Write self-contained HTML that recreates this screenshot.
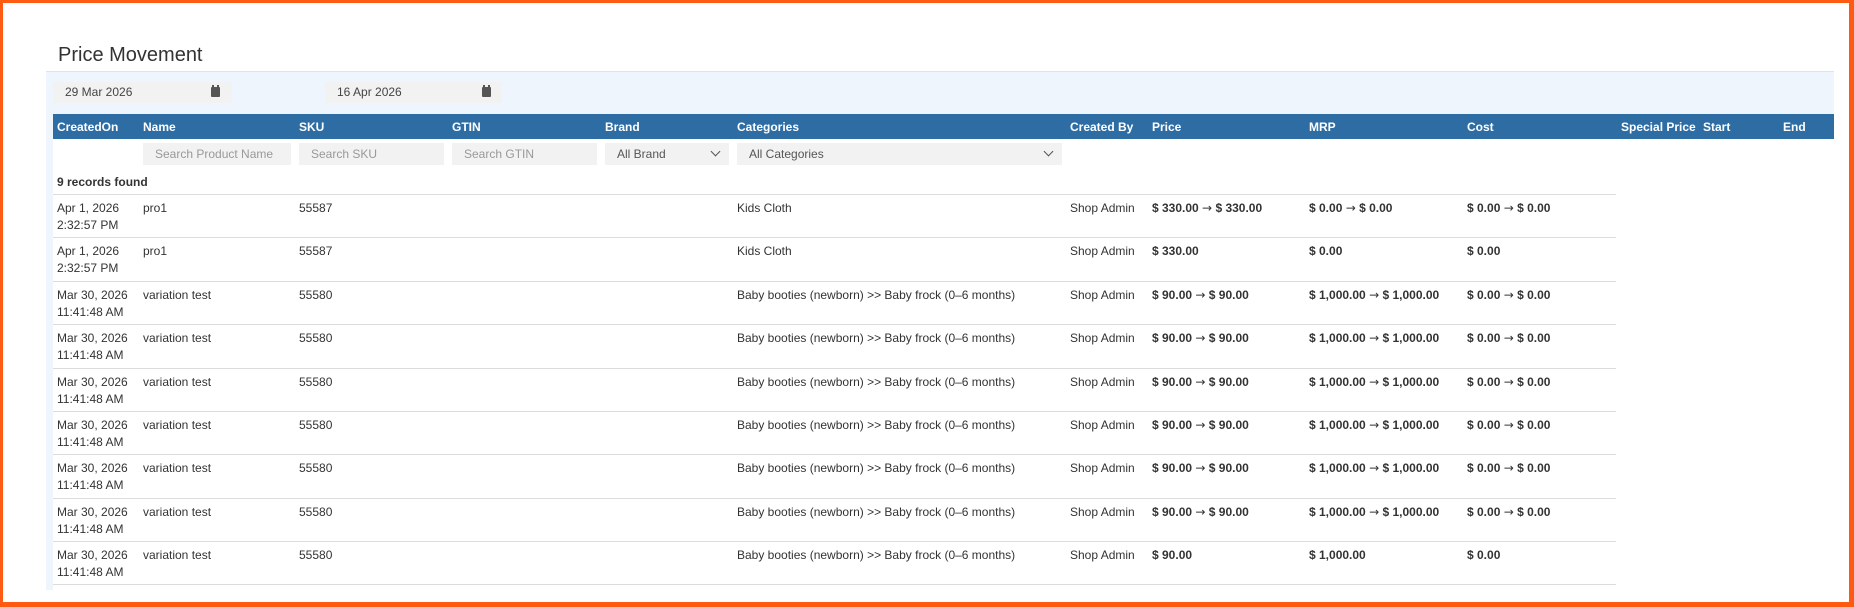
<!DOCTYPE html>
<html><head><meta charset="utf-8"><style>
*{box-sizing:border-box;margin:0;padding:0}
body{width:1854px;height:607px;background:#fff;font-family:"Liberation Sans",sans-serif;font-size:12px;color:#333;position:relative;overflow:hidden}
.frame{position:absolute;left:0;top:0;width:1854px;height:607px;border:3px solid #ff5a12;border-width:3px 5px 5px 3px}
.abs{position:absolute;white-space:nowrap}
.title{left:58px;top:44px;font-size:20px;color:#333}
.band{position:absolute;left:46px;top:71px;width:1788px;height:43px;background:#eef5fc;border-top:1px solid #dde6ee}
.strip{position:absolute;left:46px;top:114px;width:7px;height:476px;background:#eef5fc}
.date{position:absolute;top:82px;height:21px;background:#f2f2f2;font-size:12px;line-height:21px;padding-left:12px;color:#444}
.cal{position:absolute;top:5px;width:9px;height:10px;background:#555;border-radius:1px}
.cal:before{content:"";position:absolute;left:1px;top:-2px;width:2px;height:3px;background:#555;box-shadow:5px 0 0 #555}
.head{position:absolute;left:53px;top:114px;width:1781px;height:25px;background:#2e6da4}
.h{position:absolute;top:120px;color:#fff;font-weight:bold;font-size:12px}
.inp{position:absolute;top:143px;height:22px;background:#f2f2f2;color:#999;line-height:22px;padding-left:12px;font-size:12px}
.sel{color:#555}
.chev{position:absolute;right:10px;top:5px;width:7px;height:7px;border-right:1.5px solid #555;border-bottom:1.5px solid #555;transform:rotate(45deg)}
.rec{left:57px;top:175px;font-weight:bold}
.row{position:absolute;left:53px;width:1563px;height:43.4px;border-top:1px solid #dcdcdc}
.row span{position:absolute;top:5px;line-height:17px;white-space:nowrap}
.b{font-weight:bold}
.a{font-family:"DejaVu Sans",sans-serif;font-size:12px;font-weight:normal}
.last{position:absolute;left:53px;top:584px;width:1563px;border-top:1px solid #dcdcdc}
</style></head><body>
<div class="abs title">Price Movement</div>
<div class="band"></div>
<div class="strip"></div>
<div class="date" style="left:53px;width:179px">29 Mar 2026<div class="cal" style="left:158px"></div></div>
<div class="date" style="left:325px;width:177px">16 Apr 2026<div class="cal" style="left:157px"></div></div>
<div class="head"></div>
<div class="abs h" style="left:57px">CreatedOn</div>
<div class="abs h" style="left:143px">Name</div>
<div class="abs h" style="left:299px">SKU</div>
<div class="abs h" style="left:452px">GTIN</div>
<div class="abs h" style="left:605px">Brand</div>
<div class="abs h" style="left:737px">Categories</div>
<div class="abs h" style="left:1070px">Created By</div>
<div class="abs h" style="left:1152px">Price</div>
<div class="abs h" style="left:1309px">MRP</div>
<div class="abs h" style="left:1467px">Cost</div>
<div class="abs h" style="left:1621px">Special Price</div>
<div class="abs h" style="left:1703px">Start</div>
<div class="abs h" style="left:1783px">End</div>
<div class="inp" style="left:143px;width:148px">Search Product Name</div>
<div class="inp" style="left:299px;width:145px">Search SKU</div>
<div class="inp" style="left:452px;width:145px">Search GTIN</div>
<div class="inp sel" style="left:605px;width:124px">All Brand<div class="chev"></div></div>
<div class="inp sel" style="left:737px;width:325px">All Categories<div class="chev"></div></div>
<div class="abs rec">9 records found</div>
<div class="row" style="top:194px"><span style="left:4px">Apr 1, 2026<br>2:32:57 PM</span><span style="left:90px">pro1</span><span style="left:246px">55587</span><span style="left:684px">Kids Cloth</span><span style="left:1017px">Shop Admin</span><span class="b" style="left:1099px">$ 330.00 <i class="a">→</i> $ 330.00</span><span class="b" style="left:1256px">$ 0.00 <i class="a">→</i> $ 0.00</span><span class="b" style="left:1414px">$ 0.00 <i class="a">→</i> $ 0.00</span></div>
<div class="row" style="top:237.4px"><span style="left:4px">Apr 1, 2026<br>2:32:57 PM</span><span style="left:90px">pro1</span><span style="left:246px">55587</span><span style="left:684px">Kids Cloth</span><span style="left:1017px">Shop Admin</span><span class="b" style="left:1099px">$ 330.00</span><span class="b" style="left:1256px">$ 0.00</span><span class="b" style="left:1414px">$ 0.00</span></div>
<div class="row" style="top:280.8px"><span style="left:4px">Mar 30, 2026<br>11:41:48 AM</span><span style="left:90px">variation test</span><span style="left:246px">55580</span><span style="left:684px">Baby booties (newborn) &gt;&gt; Baby frock (0–6 months)</span><span style="left:1017px">Shop Admin</span><span class="b" style="left:1099px">$ 90.00 <i class="a">→</i> $ 90.00</span><span class="b" style="left:1256px">$ 1,000.00 <i class="a">→</i> $ 1,000.00</span><span class="b" style="left:1414px">$ 0.00 <i class="a">→</i> $ 0.00</span></div>
<div class="row" style="top:324.2px"><span style="left:4px">Mar 30, 2026<br>11:41:48 AM</span><span style="left:90px">variation test</span><span style="left:246px">55580</span><span style="left:684px">Baby booties (newborn) &gt;&gt; Baby frock (0–6 months)</span><span style="left:1017px">Shop Admin</span><span class="b" style="left:1099px">$ 90.00 <i class="a">→</i> $ 90.00</span><span class="b" style="left:1256px">$ 1,000.00 <i class="a">→</i> $ 1,000.00</span><span class="b" style="left:1414px">$ 0.00 <i class="a">→</i> $ 0.00</span></div>
<div class="row" style="top:367.6px"><span style="left:4px">Mar 30, 2026<br>11:41:48 AM</span><span style="left:90px">variation test</span><span style="left:246px">55580</span><span style="left:684px">Baby booties (newborn) &gt;&gt; Baby frock (0–6 months)</span><span style="left:1017px">Shop Admin</span><span class="b" style="left:1099px">$ 90.00 <i class="a">→</i> $ 90.00</span><span class="b" style="left:1256px">$ 1,000.00 <i class="a">→</i> $ 1,000.00</span><span class="b" style="left:1414px">$ 0.00 <i class="a">→</i> $ 0.00</span></div>
<div class="row" style="top:411px"><span style="left:4px">Mar 30, 2026<br>11:41:48 AM</span><span style="left:90px">variation test</span><span style="left:246px">55580</span><span style="left:684px">Baby booties (newborn) &gt;&gt; Baby frock (0–6 months)</span><span style="left:1017px">Shop Admin</span><span class="b" style="left:1099px">$ 90.00 <i class="a">→</i> $ 90.00</span><span class="b" style="left:1256px">$ 1,000.00 <i class="a">→</i> $ 1,000.00</span><span class="b" style="left:1414px">$ 0.00 <i class="a">→</i> $ 0.00</span></div>
<div class="row" style="top:454.4px"><span style="left:4px">Mar 30, 2026<br>11:41:48 AM</span><span style="left:90px">variation test</span><span style="left:246px">55580</span><span style="left:684px">Baby booties (newborn) &gt;&gt; Baby frock (0–6 months)</span><span style="left:1017px">Shop Admin</span><span class="b" style="left:1099px">$ 90.00 <i class="a">→</i> $ 90.00</span><span class="b" style="left:1256px">$ 1,000.00 <i class="a">→</i> $ 1,000.00</span><span class="b" style="left:1414px">$ 0.00 <i class="a">→</i> $ 0.00</span></div>
<div class="row" style="top:497.8px"><span style="left:4px">Mar 30, 2026<br>11:41:48 AM</span><span style="left:90px">variation test</span><span style="left:246px">55580</span><span style="left:684px">Baby booties (newborn) &gt;&gt; Baby frock (0–6 months)</span><span style="left:1017px">Shop Admin</span><span class="b" style="left:1099px">$ 90.00 <i class="a">→</i> $ 90.00</span><span class="b" style="left:1256px">$ 1,000.00 <i class="a">→</i> $ 1,000.00</span><span class="b" style="left:1414px">$ 0.00 <i class="a">→</i> $ 0.00</span></div>
<div class="row" style="top:541.2px"><span style="left:4px">Mar 30, 2026<br>11:41:48 AM</span><span style="left:90px">variation test</span><span style="left:246px">55580</span><span style="left:684px">Baby booties (newborn) &gt;&gt; Baby frock (0–6 months)</span><span style="left:1017px">Shop Admin</span><span class="b" style="left:1099px">$ 90.00</span><span class="b" style="left:1256px">$ 1,000.00</span><span class="b" style="left:1414px">$ 0.00</span></div>
<div class="last"></div>
<div class="frame"></div>
</body></html>
